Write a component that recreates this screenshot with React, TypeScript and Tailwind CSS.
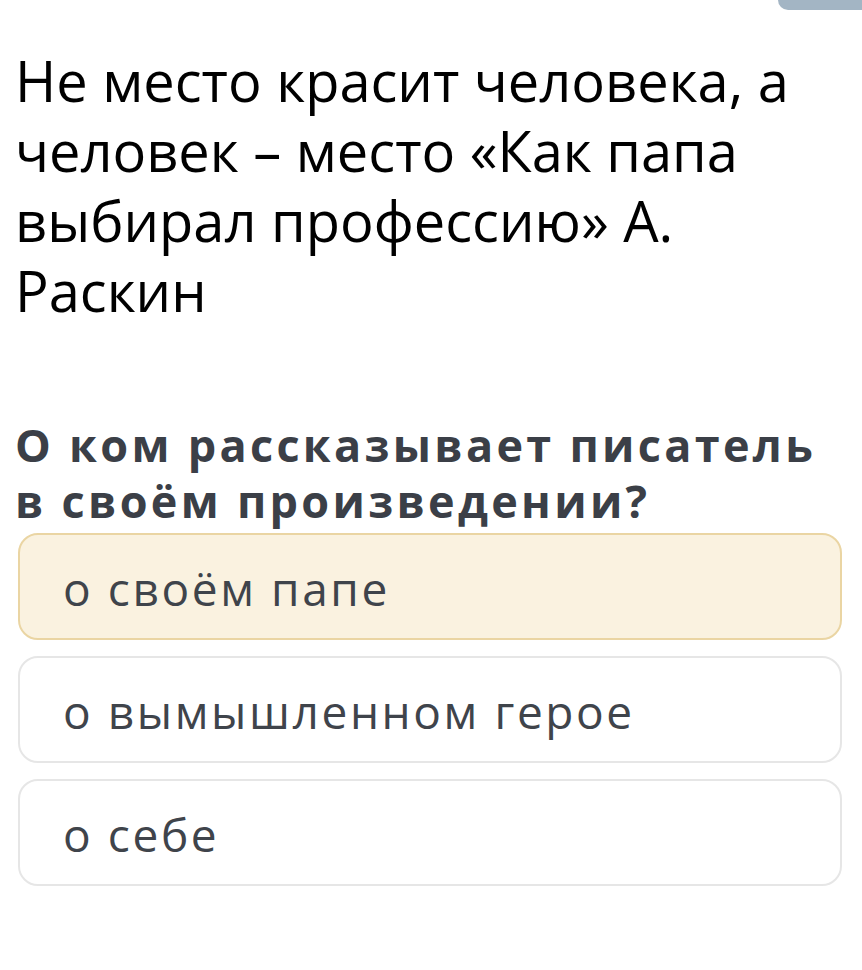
import React from "react";

const options = [
  { label: "о своём папе", selected: true },
  { label: "о вымышленном герое", selected: false },
  { label: "о себе", selected: false },
];

export default function App() {
  return (
    <div className="relative min-h-[970px] bg-white font-['Open_Sans',sans-serif]">
      <div className="absolute right-0 top-0 h-[10px] w-[84px] rounded-bl-[10px] bg-[#a3b5c4]" />

      <div className="px-[15px] pt-[45px]">
        <h1 className="text-[56px] font-normal leading-[70px] text-black">
          Не место красит человека, а человек – место «Как папа выбирал профессию» А. Раскин
        </h1>
        <h2 className="mt-[92px] text-[45px] font-bold leading-[56px] tracking-[3.3px] text-[#3b3f47]">
          О ком рассказывает писатель в своём произведении?
        </h2>
      </div>

      <div className="mt-[4px] flex flex-col gap-[16px] pl-[18px] pr-[20px]">
        {options.map((o) => (
          <div
            key={o.label}
            className={
              o.selected
                ? "flex h-[107px] items-center rounded-[20px] border-2 border-[#ead5a3] bg-[#faf2e0] pl-[43px] pt-[3px]"
                : "flex h-[107px] items-center rounded-[20px] border-2 border-[#e6e6e6] bg-white pl-[43px] pt-[3px]"
            }
          >
            <span className="text-[46px] leading-none tracking-[2.6px] text-[#3f444b]">{o.label}</span>
          </div>
        ))}
      </div>
    </div>
  );
}
